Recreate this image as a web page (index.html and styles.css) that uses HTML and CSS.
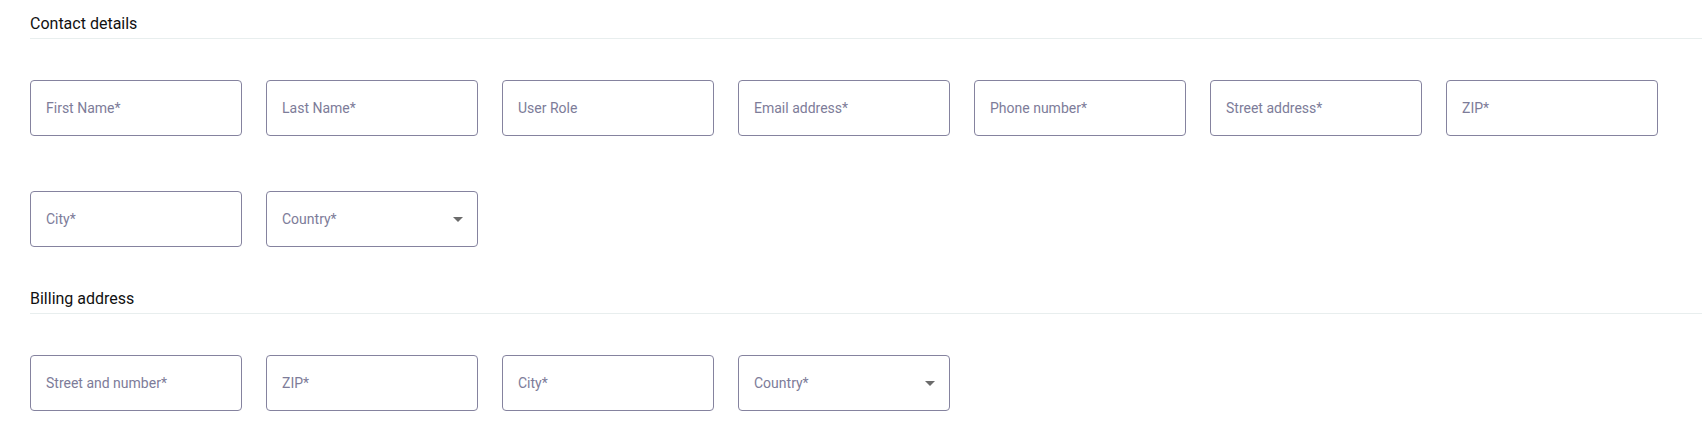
FILE: index.html
```html
<!DOCTYPE html>
<html lang="en">
<head>
<meta charset="utf-8">
<title>Contact form</title>
<link rel="stylesheet" href="styles.css">
</head>
<body>
<main class="page">
  <section class="section">
    <h2 class="section-title">Contact details</h2>
    <div class="fields">
      <input class="field" type="text" placeholder="First Name*">
      <input class="field" type="text" placeholder="Last Name*">
      <input class="field" type="text" placeholder="User Role">
      <input class="field" type="text" placeholder="Email address*">
      <input class="field" type="text" placeholder="Phone number*">
      <input class="field" type="text" placeholder="Street address*">
      <input class="field" type="text" placeholder="ZIP*">
      <input class="field" type="text" placeholder="City*">
      <div class="field select">
        <span class="select-label">Country*</span>
        <svg class="caret" width="10" height="5" viewBox="0 0 10 5"><path d="M0 0h10L5 5z" fill="#6b6b6b"/></svg>
      </div>
    </div>
  </section>
  <section class="section">
    <h2 class="section-title">Billing address</h2>
    <div class="fields">
      <input class="field" type="text" placeholder="Street and number*">
      <input class="field" type="text" placeholder="ZIP*">
      <input class="field" type="text" placeholder="City*">
      <div class="field select">
        <span class="select-label">Country*</span>
        <svg class="caret" width="10" height="5" viewBox="0 0 10 5"><path d="M0 0h10L5 5z" fill="#6b6b6b"/></svg>
      </div>
    </div>
  </section>
</main>
</body>
</html>
```
FILE: styles.css
```css
* { box-sizing: border-box; }
html, body { margin: 0; padding: 0; background: #ffffff; }
body { font-family: Roboto, "Liberation Sans", Arial, sans-serif; }
.page { padding: 12px 0 0 30px; }
.section { margin-bottom: 40px; }
.section-title {
  margin: 0;
  font-size: 16px;
  line-height: 24px;
  font-weight: 400;
  color: #111111;
  padding-bottom: 2px;
  border-bottom: 1px solid #e8eeee;
}
.fields {
  margin-top: 41px;
  display: grid;
  grid-template-columns: repeat(7, 212px);
  column-gap: 24px;
  row-gap: 55px;
}
.field {
  width: 212px;
  height: 56px;
  margin: 0;
  border: 1px solid #85839f;
  border-radius: 4px;
  padding: 0 15px;
  font-family: Roboto, "Liberation Sans", Arial, sans-serif;
  font-size: 14px;
  color: #333;
  background: #fff;
  outline: none;
}
.field::placeholder { color: #7d7c99; opacity: 1; }
.select {
  display: flex;
  align-items: center;
  justify-content: space-between;
  padding-right: 14px;
}
.select-label { color: #7d7c99; font-size: 14px; }
.caret { display: block; margin-top: 1px; }
```
